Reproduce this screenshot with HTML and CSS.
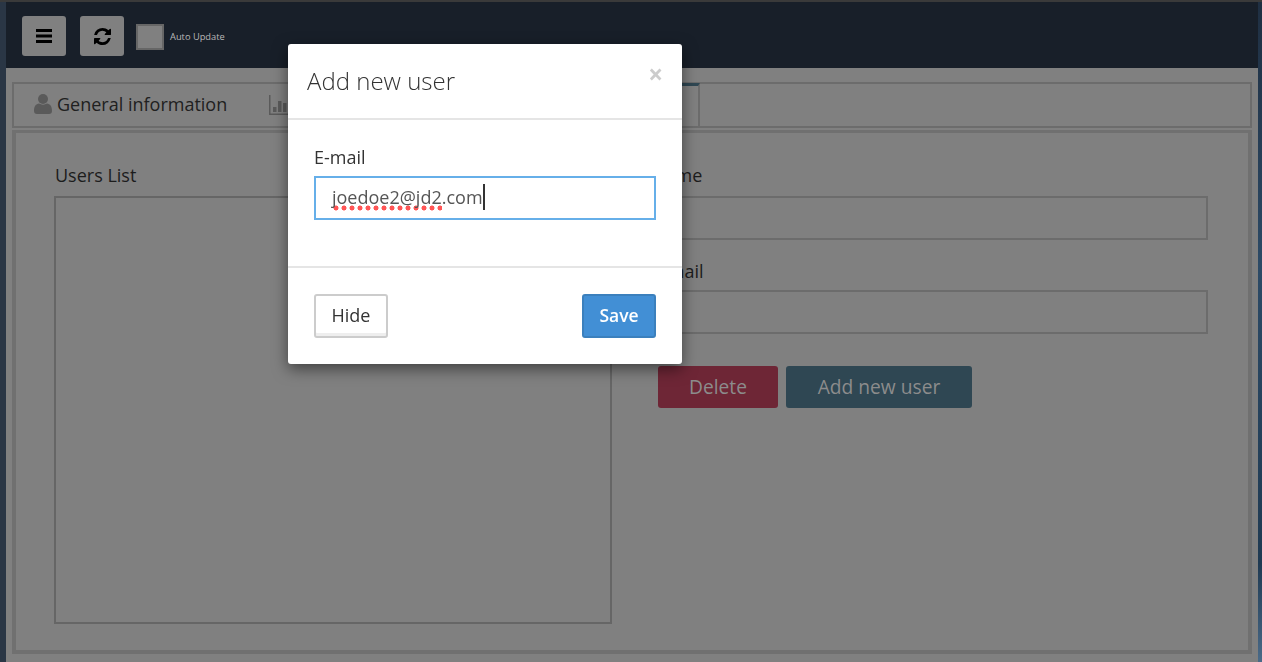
FILE: index.html
```html
<!DOCTYPE html>
<html lang="en">

<head>
    <meta charset="UTF-8">
    <meta name="viewport" content="width=device-width, initial-scale=1.0">
    <title>Users</title>
    <link rel="stylesheet" href="styles.css">
</head>

<body>
    <div class="page">
        <div class="strip-left"></div>

        <div class="main">
            <header class="topbar">
                <button class="tool-btn">
                    <svg class="bars-icon" viewBox="0 0 16 14"><path d="M0 0h16v3H0zM0 5.500h16v3H0zM0 11h16v3H0z"/></svg>
                </button>
                <button class="tool-btn">
                    <svg class="refresh-icon" viewBox="0 0 1536 1536"><path d="M1511 928q0 5-1 7-64 268-268 434.500t-478 166.500q-146 0-282.500-55t-243.500-157l-129 129q-19 19-45 19t-45-19-19-45v-448q0-26 19-45t45-19h448q26 0 45 19t19 45-19 45l-137 137q71 66 161 102t187 36q134 0 250-65t186-179q11-17 53-117 8-23 30-23h192q13 0 22.500 9.500t9.500 22.500zm25-800v448q0 26-19 45t-45 19h-448q-26 0-45-19t-19-45 19-45l138-138q-148-137-349-137-134 0-250 65t-186 179q-11 17-53 117-8 23-30 23h-199q-13 0-22.500-9.500t-9.500-22.500v-7q65-268 270-434.500t480-166.500q146 0 284 55.500t245 156.500l130-129q19-19 45-19t45 19 19 45z"/></svg>
                </button>
                <span class="check-box"></span>
                <span class="auto-label">Auto Update</span>
            </header>

            <div class="content">
                <div class="tabs">
                    <div class="tab tab-general">
                        <svg class="user-icon" viewBox="0 0 18 20"><circle cx="9" cy="5" r="5"/><path d="M0 17c0-5 2-7 5-7.500 2.500 1.500 5.500 1.500 8 0 3 .5 5 2.500 5 7.500 0 2-1 3-3 3H3c-2 0-3-1-3-3z"/></svg>
                        <span>General information</span>
                    </div>
                    <div class="tab tab-stats">
                        <svg class="chart-icon" viewBox="0 0 24 20"><path d="M0 0h1.500v18.500H24V20H0z"/><path d="M4 12h3.500v5H4zM9 6h3.500v11H9zM14 8h3.500v9H14zM19 3h3.500v14H19z"/></svg>
                    </div>
                    <div class="tab tab-active"></div>
                </div>

                <div class="panel">
                    <div class="list-col">
                        <div class="field-label">Users List</div>
                        <div class="users-list"></div>
                    </div>
                    <div class="form-col">
                        <div class="field-label">Name</div>
                        <div class="text-input"></div>
                        <div class="field-label second">E-mail</div>
                        <div class="text-input"></div>
                        <div class="actions">
                            <button class="btn-delete">Delete</button>
                            <button class="btn-add">Add new user</button>
                        </div>
                    </div>
                </div>
            </div>
        </div>

        <div class="strip-right"></div>
    </div>

    <div class="modal">
        <div class="modal-header">
            <h2>Add new user</h2>
            <span class="modal-close">×</span>
        </div>
        <div class="modal-body">
            <div class="modal-label">E-mail</div>
            <div class="modal-input">
                <span class="typed"><span class="misspelled">joedoe2@jd2</span>.com</span>
                <span class="caret"></span>
            </div>
        </div>
        <div class="modal-footer">
            <button class="btn-hide">Hide</button>
            <button class="btn-save">Save</button>
        </div>
    </div>
</body>

</html>
```

FILE: styles.css
```css
html, body {
    margin: 0;
    padding: 0;
}

body {
    font-family: "Open Sans", sans-serif;
    background-color: #808080;
    overflow: hidden;
}

button {
    font-family: "Open Sans", sans-serif;
    cursor: pointer;
}

.page {
    display: flex;
    width: 1262px;
    height: 662px;
    overflow: hidden;
}

.strip-left {
    width: 6px;
    background-color: #2a3645;
    border-top: 2px solid #3a3a3a;
}

.strip-right {
    width: 4px;
    background: linear-gradient(#1f2f42, #2c4a66 40%, #1f3a52 85%, #4a6a88);
    border-top: 2px solid #3a3a3a;
}

.main {
    flex: 1;
    display: flex;
    flex-direction: column;
}

.topbar {
    box-sizing: border-box;
    display: flex;
    align-items: flex-start;
    height: 68px;
    padding: 14px 16px 0;
    background-color: #181f29;
    border-top: 2px solid #3a3a3a;
}

.tool-btn {
    display: flex;
    align-items: center;
    justify-content: center;
    width: 44px;
    height: 40px;
    margin-right: 14px;
    padding: 0;
    border: none;
    border-radius: 3px;
    background-color: #808080;
}

.bars-icon {
    width: 16px;
    height: 14px;
}

.refresh-icon {
    width: 17px;
    height: 17px;
}

.check-box {
    box-sizing: border-box;
    width: 28px;
    height: 26px;
    margin: 8px 0 0 -2px;
    border: 2px solid #666;
    background-color: #808080;
}

.auto-label {
    margin: 14px 0 0 6px;
    font-size: 9.300px;
    line-height: 14px;
    color: #b8b8b8;
}

.content {
    flex: 1;
    padding: 14px 6px 8px;
}

.tabs {
    box-sizing: border-box;
    display: flex;
    height: 46px;
    border: 2px solid #6c6c6c;
}

.tab {
    display: flex;
    align-items: center;
    font-size: 18px;
    color: #202020;
}

.tab-general {
    width: 255px;
    padding: 0 0 2px 20px;
    box-sizing: border-box;
}

.user-icon {
    width: 18px;
    height: 20px;
    margin-right: 5px;
    fill: #5a5a5a;
}

.tab-stats {
    width: 200px;
}

.chart-icon {
    width: 24px;
    height: 20px;
    fill: #5a5a5a;
}

.tab-active {
    box-sizing: border-box;
    flex: none;
    width: 231px;
    height: 45px;
    margin-top: -1px;
    border-top: 3px solid #2f4753;
    border-right: 2px solid #6c6c6c;
}

.panel {
    box-sizing: border-box;
    display: flex;
    gap: 40px;
    height: 524px;
    margin-top: 2px;
    padding: 31px 40px 0 38px;
    border: 4px solid #707070;
    border-top-width: 3px;
}

.list-col {
    width: 558px;
}

.form-col {
    flex: 1;
}

.field-label {
    height: 22px;
    margin-bottom: 10px;
    font-size: 18px;
    line-height: 22px;
    color: #1c1c1c;
}

.list-col .field-label {
    padding-left: 1px;
}

.field-label.second {
    margin-top: 20px;
    margin-bottom: 8px;
}

.users-list {
    box-sizing: border-box;
    height: 428px;
    border: 2px solid #666;
}

.text-input {
    box-sizing: border-box;
    height: 44px;
    border: 2px solid #6c6c6c;
}

.actions {
    display: flex;
    gap: 8px;
    margin-top: 32px;
    padding-left: 6px;
}

.btn-delete, .btn-add {
    height: 42px;
    padding: 0 0 2px;
    border: none;
    border-radius: 3px;
    font-size: 19.200px;
    color: #8c8c8c;
}

.btn-delete {
    width: 120px;
    background-color: #6e2636;
}

.btn-add {
    width: 186px;
    background-color: #2f4753;
}

/* dialog */

.modal {
    position: fixed;
    top: 44px;
    left: 288px;
    box-sizing: border-box;
    width: 394px;
    height: 320px;
    background-color: #fff;
    border-radius: 3px;
    box-shadow: 0 5px 15px rgba(0, 0, 0, 0.5);
}

.modal-header {
    display: flex;
    justify-content: space-between;
    box-sizing: border-box;
    height: 76px;
    padding: 18px 19px 0;
    border-bottom: 2px solid #e5e5e5;
}

.modal-header h2 {
    margin: 0;
    font-size: 24px;
    font-weight: 300;
    line-height: 38px;
    color: #333;
}

.modal-close {
    font-size: 26px;
    font-weight: 700;
    line-height: 24px;
    color: #ccc;
}

.modal-body {
    box-sizing: border-box;
    height: 148px;
    padding: 26px 26px 0;
    border-bottom: 2px solid #e5e5e5;
}

.modal-label {
    height: 22px;
    margin-bottom: 8px;
    font-size: 18px;
    line-height: 22px;
    color: #333;
}

.modal-input {
    box-sizing: border-box;
    display: flex;
    align-items: center;
    height: 44px;
    padding-left: 16px;
    border: 2px solid #66afe9;
    font-size: 18px;
    color: #555;
}

.typed {
    line-height: 24px;
    margin-top: -3px;
}

.misspelled {
    display: inline-block;
    padding-bottom: 2px;
    margin-bottom: -2px;
    background-image: radial-gradient(circle, #f55 2.200px, transparent 2.800px);
    background-size: 8px 6px;
    background-repeat: repeat-x;
    background-position: 0 bottom;
}

.caret {
    width: 2px;
    height: 26px;
    margin-top: -2px;
    background-color: #333;
}

.modal-footer {
    display: flex;
    justify-content: space-between;
    padding: 26px 26px 0;
}

.btn-hide, .btn-save {
    box-sizing: border-box;
    width: 74px;
    height: 44px;
    padding: 0 0 2px;
    border-radius: 3px;
    font-size: 18px;
}

.btn-hide {
    border: 2px solid #ccc;
    background-color: #fff;
    box-shadow: inset 0 -3px 0 #eee;
    color: #333;
}

.btn-save {
    border: 2px solid #3b80bd;
    background-color: #428fd5;
    font-size: 17.500px;
    font-weight: 600;
    color: #fff;
}
```
